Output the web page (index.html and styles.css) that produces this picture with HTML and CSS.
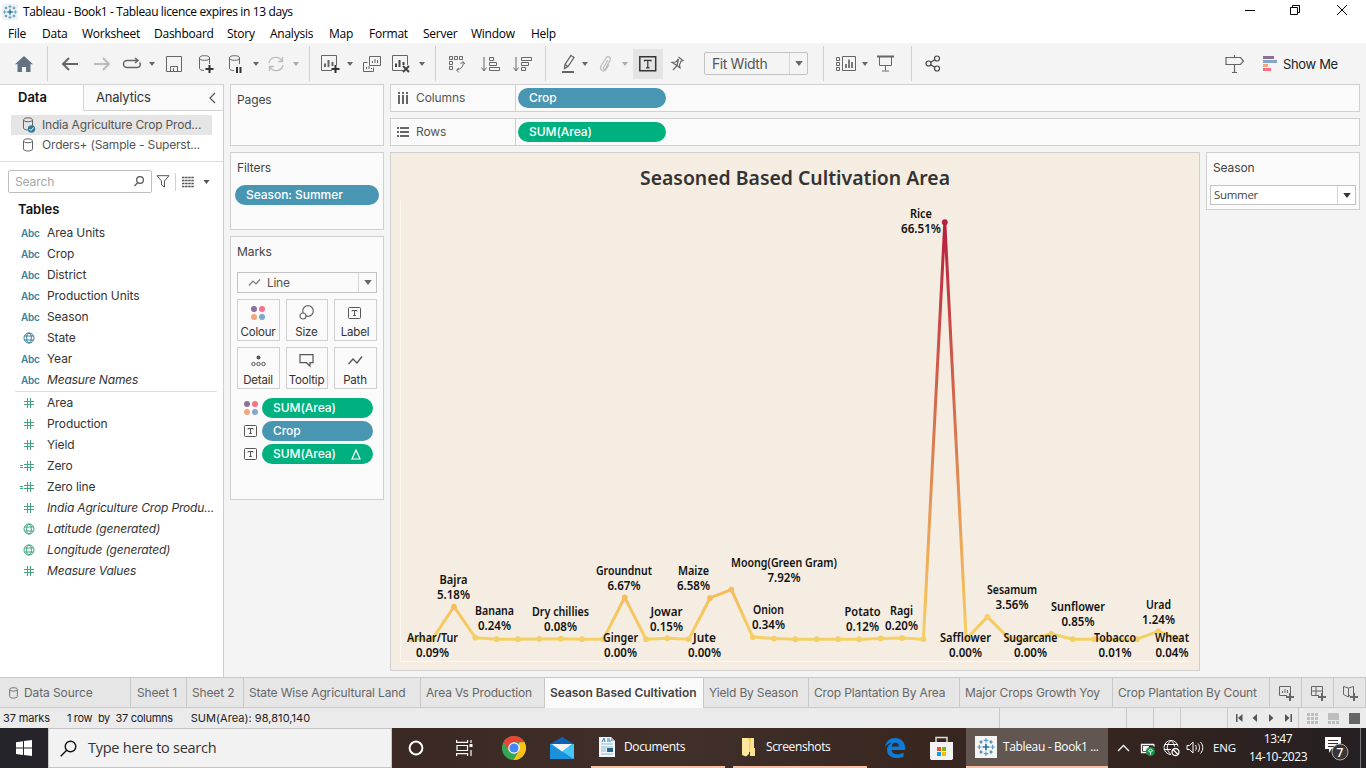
FILE: index.html
```html
<!DOCTYPE html>
<html lang="en">
<head>
<meta charset="utf-8">
<title>Tableau - Book1</title>
<link rel="stylesheet" href="styles.css">
</head>
<body>
<svg width="0" height="0" class="defs">
  <defs>
    <symbol id="arrow" viewBox="0 0 6 4"><path d="M0 0h6L3 4z" fill="currentColor"/></symbol>
    <symbol id="logo" viewBox="0 0 18 18"><g stroke="#1f77a4" fill="none"><path d="M9 6v6M6 9h6" stroke-width="1.5"/><path d="M9 1v4M7 3h4M9 13v4M7 15h4M1 9h4M3 7v4M13 9h4M15 7v4" stroke="#5a9dbd"/><path d="M4.500 3v3M3 4.500h3M13.500 3v3M12 4.500h3M4.500 12v3M3 13.500h3M13.500 12v3M12 13.500h3" stroke="#447d9e"/></g></symbol>
    <symbol id="cyl" viewBox="0 0 12 14"><g fill="none" stroke="#666"><ellipse cx="6" cy="2.800" rx="4.500" ry="2"/><path d="M1.500 3v8c0 1.200 2 2 4.500 2s4.500-.8 4.500-2V3"/></g></symbol>
    <symbol id="globe" viewBox="0 0 12 12"><g fill="none" stroke="currentColor"><circle cx="6" cy="6" r="5"/><ellipse cx="6" cy="6" rx="2.300" ry="5"/><path d="M1.500 4h9M1.500 8h9"/></g></symbol>
    <symbol id="hash" viewBox="0 0 16 12"><path d="M8.500 1v10M11.500 1v10M5 4.500h10M5 7.500h10" stroke="currentColor" fill="none"/></symbol>
    <symbol id="calc" viewBox="0 0 16 12"><path d="M8.500 1v10M11.500 1v10M5 4.500h10M5 7.500h10M1 5.500h3M1 7.500h3" stroke="currentColor" fill="none"/></symbol>
    <symbol id="tbox" viewBox="0 0 14 12"><rect x=".5" y=".5" width="12" height="11" rx="1" fill="none" stroke="#555"/><path d="M4 4.500V3.500h5v1M6.500 3.500v5M5.200 8.500h2.600" stroke="#555" fill="none"/></symbol>
    <symbol id="dots" viewBox="0 0 14 14"><circle cx="3" cy="3" r="3" fill="#8b7099"/><circle cx="11" cy="3" r="3" fill="#fb7085"/><circle cx="3" cy="11" r="3" fill="#f4a77c"/><circle cx="11" cy="11" r="3" fill="#84a6cb"/></symbol>
  </defs>
</svg>

<header class="titlebar">
  <svg class="app-logo" width="16" height="16"><use href="#logo"/></svg>
  <span class="app-title">Tableau - Book1 - Tableau licence expires in 13 days</span>
  <svg class="winctl" width="106" height="12" fill="none" stroke="#000"><path d="M0 6.500h10M45.500 3.500h7v7h-7zM47.500 3.500v-2h7v7h-2M92 1l10 10M102 1L92 11"/></svg>
</header>
<nav class="menubar"><span>File</span><span>Data</span><span>Worksheet</span><span>Dashboard</span><span>Story</span><span>Analysis</span><span>Map</span><span>Format</span><span>Server</span><span>Window</span><span>Help</span></nav>

<div class="toolbar">
  <span class="ic"><svg width="18" height="16"><path d="M9 0l9 8.200h-2.500V16h-4.500v-5H7v5H2.500V8.200H0z" fill="#657282"/></svg></span>
  <i class="sep"></i>
  <span class="ic"><svg width="17" height="14"><path d="M7 1L1 7l6 6M1 7h15" stroke-width="2"/></svg></span>
  <span class="ic faint"><svg width="17" height="14"><path d="M9 1l6 6-6 6M15 7H0" stroke-width="2"/></svg></span>
  <span class="ic"><svg width="18" height="12"><path d="M5 9.500H4a3 3 0 0 1 0-7h11M12 0l3 2.500L12 5M14 9.500a3 3 0 0 0 2.500-5M4 9.500h10.500" stroke-width="1.500"/></svg></span>
  <span class="dd"><svg><use href="#arrow"/></svg></span>
  <span class="ic"><svg width="16" height="16"><path d="M.5.5h15v15H.5zM4.500 15v-4.500h7V15M7.500 12v3"/></svg></span>
  <span class="ic"><svg width="16" height="18"><ellipse cx="6.500" cy="3" rx="5" ry="2.300"/><path d="M1.500 3v10.500c0 1 2 2 4.500 2M11.500 3v6"/><path d="M11.500 10v8M7.500 14h8" stroke="#333" stroke-width="2"/></svg></span>
  <span class="ic"><svg width="16" height="18"><ellipse cx="6.500" cy="3" rx="5" ry="2.300"/><path d="M1.500 3v10.500c0 1 2 2 4.500 2M11.500 3v6"/><path d="M9 12v6M12.500 12v6" stroke="#333" stroke-width="2"/></svg></span>
  <span class="dd"><svg><use href="#arrow"/></svg></span>
  <span class="ic faint"><svg width="18" height="16"><path d="M2 7a7 7 0 0 1 13-2M16 9a7 7 0 0 1-13 2M15.500 1v4.500H11M2.500 15v-4.500H7" stroke-width="1.300"/></svg></span>
  <span class="dd faint"><svg><use href="#arrow"/></svg></span>
  <i class="sep"></i>
  <span class="ic"><svg width="20" height="18"><path d="M12 15.500H1.500V.5h15V10"/><path d="M5 12V8.500M8.500 12V5M12.500 11V7" stroke-width="2"/><path d="M15.500 10v8M11.500 14h8" stroke="#333" stroke-width="2"/></svg></span>
  <span class="dd"><svg><use href="#arrow"/></svg></span>
  <span class="ic"><svg width="18" height="16"><path d="M6.500.5h11v9h-11zM4.500 6.500h-4v9h10v-4M9.500 7V5M12 7V3M14.500 7V4M3.500 13v-2M6 13v-3M8.500 13v-1"/></svg></span>
  <span class="ic"><svg width="20" height="18"><path d="M12 15.500H1.500V.5h15V10"/><path d="M5 12V8.500M8.500 12V5M12.500 10V7M12 11l6 6M18 11l-6 6" stroke="#444" stroke-width="2"/></svg></span>
  <span class="dd"><svg><use href="#arrow"/></svg></span>
  <i class="sep"></i>
  <span class="ic"><svg width="18" height="18"><path d="M1.500 1.500h3v3h-3zM6.500 1.500h3v3h-3zM11.500 1.500h3v3h-3zM1.500 6.500h3v3h-3zM1.500 11.500h3v3h-3zM15 7c1 4-2 7-6 8M12.500 9l2.500-2.500L17 9M11 13l-2.500 2 2.500 2.500"/></svg></span>
  <span class="ic"><svg width="19" height="16"><path d="M3 1v13M.5 11.500L3 15l2.500-3.500M8.500 1.500h4v3h-4zM8.500 6.500h7v3h-7zM8.500 11.500h10v3h-10z"/></svg></span>
  <span class="ic"><svg width="19" height="16"><path d="M3 1v13M.5 11.500L3 15l2.500-3.500M8.500 1.500h10v3h-10zM8.500 6.500h7v3h-7zM8.500 11.500h4v3h-4z"/></svg></span>
  <i class="sep"></i>
  <i></i>
  <span class="ic"><svg width="13" height="20"><path d="M9 1.500l3 2-6 9-3.500 2 .5-4zM3 10.500l3 2" stroke-width="1.300"/><path d="M0 18h12" stroke-width="2"/></svg></span>
  <span class="dd"><svg><use href="#arrow"/></svg></span>
  <span class="ic faint"><svg width="14" height="18"><path d="M10 5L5.500 12.500c-1 1.500 1 2.500 2 1l4.500-8c1.500-3-2-5.500-4-2.500L3 11c-2 4 3 7 5 3.500l3-5" stroke-width="1.200"/></svg></span>
  <span class="dd faint"><svg><use href="#arrow"/></svg></span>
  <span class="ic on"><svg width="18" height="16"><path d="M.8.8h15.900v14H.8z" stroke-width="1.500" stroke="#333"/><path d="M5.500 5.500V4.300h6.500v1.200M8.800 4.300v7.500M7 11.800h3.600" stroke-width="1.200" stroke="#333"/></svg></span>
  <span class="ic"><svg width="14" height="16"><path d="M8.500 1l4.500 3.500-2 .8-1.500 3.500.5 3L7 9.500 3 14M7 9.500L2 6.500l4-.5 2.500-3z" stroke-width="1.200"/></svg></span>
  <i></i>
  <span class="fit"><b>Fit Width</b><em><svg><use href="#arrow"/></svg></em></span>
  <i class="sep"></i>
  <i></i>
  <span class="ic"><svg width="20" height="16"><path d="M.5 1.500h3v3h-3zM.5 6.500h3v3h-3zM.5 11.500h3v3h-3zM6.500.5h13v14h-13z"/><path d="M10 12V8M13 12V3.500M16 12V6" stroke-width="1.700"/></svg></span>
  <span class="dd"><svg><use href="#arrow"/></svg></span>
  <span class="ic present"><svg width="17" height="17"><path d="M0 1.500h17" stroke-width="2"/><path d="M2.500 2v8.500h12V2M8.500 10v5.500M5 16h7"/></svg></span>
  <i class="sep"></i>
  <span class="ic share"><svg width="16" height="17"><circle cx="3.500" cy="8.500" r="2.500"/><circle cx="12" cy="3.500" r="2.500"/><circle cx="12" cy="13.500" r="2.500"/><path d="M5.800 7.200l4-2.400M5.800 9.800l4 2.400"/></svg></span>
  <i></i>
  <span class="ic"><svg width="19" height="18"><path d="M1 2.500h14.500l3 3.500-3 3.500H1zM9.500 0v2M9.500 10v7M7 17.500h5" stroke-width="1.200"/></svg></span>
  <span class="showme"><svg width="14" height="16"><path d="M0 0h11v3H0z" fill="#8b7099"/><path d="M0 4h14v3H0z" fill="#84a6cb"/><path d="M0 8h5v3H0z" fill="#f4a77c"/><path d="M0 12h8v3H0z" fill="#fb7085"/></svg>Show Me</span>
</div>

<main class="work">
  <aside class="data">
    <div class="dtabs"><span class="on">Data</span><span class="off">Analytics<svg width="7" height="12"><path d="M5 1L0 6l5 5" fill="none" stroke="#555" stroke-width="1.200"/></svg></span></div>
    <div class="sources">
      <p class="sel"><svg width="14" height="16"><use href="#cyl" width="12" height="14"/><circle cx="9.500" cy="12" r="3.700" fill="#2f7d9f"/><path d="M7.500 12l1.500 1.500 2.500-3" stroke="#fff" fill="none"/></svg>India Agriculture Crop Prod...</p>
      <p><svg width="14" height="14"><use href="#cyl" width="12" height="14"/></svg>Orders+ (Sample - Superst...</p>
    </div>
    <div class="searchrow">
      <span class="search">Search<svg width="10" height="11" fill="none" stroke="#555" stroke-width="1.200"><circle cx="6" cy="4" r="3.400"/><path d="M3.700 6.500L.5 10"/></svg></span>
      <svg class="funnel" width="14" height="13"><path d="M1 .7h12L8.500 6v6l-3-2V6z" fill="none" stroke="#555"/></svg>
      <i class="vline"></i>
      <svg width="12" height="10" stroke="#555"><path d="M0 .5h12M0 3.500h12M0 6.500h12M0 9.500h12" stroke-width="1.500" stroke-dasharray="2.500 .6"/></svg>
      <svg class="ddbig"><use href="#arrow"/></svg>
    </div>
    <h2>Tables</h2>
    <ul class="fields">
      <li><b>Abc</b>Area Units</li>
      <li><b>Abc</b>Crop</li>
      <li><b>Abc</b>District</li>
      <li><b>Abc</b>Production Units</li>
      <li><b>Abc</b>Season</li>
      <li><b><svg width="12" height="12"><use href="#globe"/></svg></b>State</li>
      <li><b>Abc</b>Year</li>
      <li class="it"><b>Abc</b>Measure Names</li>
    </ul>
    <ul class="fields meas">
      <li><b><svg width="16" height="12"><use href="#hash"/></svg></b>Area</li>
      <li><b><svg width="16" height="12"><use href="#hash"/></svg></b>Production</li>
      <li><b><svg width="16" height="12"><use href="#hash"/></svg></b>Yield</li>
      <li><b><svg width="16" height="12"><use href="#calc"/></svg></b>Zero</li>
      <li><b><svg width="16" height="12"><use href="#calc"/></svg></b>Zero line</li>
      <li class="it"><b><svg width="16" height="12"><use href="#hash"/></svg></b><span class="long">India Agriculture Crop Produ...</span></li>
      <li class="it"><b><svg width="12" height="12"><use href="#globe"/></svg></b>Latitude (generated)</li>
      <li class="it"><b><svg width="12" height="12"><use href="#globe"/></svg></b>Longitude (generated)</li>
      <li class="it"><b><svg width="16" height="12"><use href="#hash"/></svg></b>Measure Values</li>
    </ul>
  </aside>

  <section class="cards">
    <div class="card pages"><h3>Pages</h3></div>
    <div class="card filters"><h3>Filters</h3><span class="pill blue">Season: Summer</span></div>
    <div class="card marks">
      <h3>Marks</h3>
      <div class="marktype"><svg width="12" height="8" fill="none" stroke="#777" stroke-width="1.200"><path d="M0 6.500L4 2l3 3 4-4.500"/></svg><span>Line</span><em><svg><use href="#arrow"/></svg></em></div>
      <div class="btns">
        <span><svg width="14" height="14"><use href="#dots"/></svg>Colour</span>
        <span><svg width="16" height="15" fill="none" stroke="#666" stroke-width="1.200"><circle cx="9" cy="6" r="5.300"/><circle cx="4" cy="11" r="3" fill="#fafafa"/></svg>Size</span>
        <span><svg width="14" height="12"><use href="#tbox"/></svg>Label</span>
        <span><svg width="15" height="12" fill="none" stroke="#555"><circle cx="7.500" cy="2.500" r="2" fill="#555" stroke="none"/><circle cx="2.500" cy="9" r="1.700"/><circle cx="7.500" cy="9" r="1.700"/><circle cx="12.500" cy="9" r="1.700"/></svg>Detail</span>
        <span><svg width="15" height="13" fill="none" stroke="#555" stroke-width="1.200"><path d="M1 .7h13v8h-3V12L7.500 8.700H1z"/></svg>Tooltip</span>
        <span><svg width="15" height="9" fill="none" stroke="#555" stroke-width="1.300"><path d="M.5 8L5 3l4 4 5-6.500"/></svg>Path</span>
      </div>
      <div class="enc"><i><svg width="14" height="14"><use href="#dots"/></svg></i><span class="pill green">SUM(Area)</span></div>
      <div class="enc"><i><svg width="14" height="12"><use href="#tbox"/></svg></i><span class="pill blue">Crop</span></div>
      <div class="enc"><i><svg width="14" height="12"><use href="#tbox"/></svg></i><span class="pill green">SUM(Area)<svg width="11" height="11"><path d="M5 1L9 10H1z" fill="none" stroke="#fff" stroke-width="1.200"/></svg></span></div>
    </div>
  </section>

  <section class="sheet">
    <div class="shelf"><span class="lab"><svg width="12" height="12" fill="#666"><path d="M1 0h2v2H1zM5 0h2v2H5zM9 0h2v2H9zM1 3h2v9H1zM5 3h2v9H5zM9 3h2v9H9z"/></svg>Columns</span><span class="pill blue">Crop</span></div>
    <div class="shelf"><span class="lab"><svg width="12" height="10" fill="#666"><path d="M0 0h2v2H0zM0 4h2v2H0zM0 8h2v2H0zM3 0h9v2H3zM3 4h9v2H3zM3 8h9v2H3z"/></svg>Rows</span><span class="pill green">SUM(Area)</span></div>
    <div class="viewrow">
      <div class="view"><svg id="chart" width="808" height="517" viewBox="391 153 808 517">
        <defs><linearGradient id="heat" gradientUnits="userSpaceOnUse" x1="0" y1="639" x2="0" y2="222">
          <stop offset="0" stop-color="#f4d166"/><stop offset=".11" stop-color="#f6bb59"/><stop offset=".25" stop-color="#eaa359"/><stop offset=".5" stop-color="#d9754f"/><stop offset=".75" stop-color="#c94a47"/><stop offset="1" stop-color="#b71d3e"/>
        </linearGradient></defs>
        <path d="M400.500 199v462.500H1191" fill="none" stroke="#fbf7f1"/>
        <text class="ctitle" x="795" y="185" textLength="310" lengthAdjust="spacingAndGlyphs">Seasoned Based Cultivation Area</text>
      </svg></div>
      <div class="legend"><h3>Season</h3><div class="combo"><span>Summer</span><em><svg><use href="#arrow"/></svg></em></div></div>
    </div>
  </section>
</main>

<nav class="sheets">
  <span><svg width="11" height="12"><use href="#cyl"/></svg>Data Source</span><span>Sheet 1</span><span>Sheet 2</span><span>State Wise Agricultural Land</span><span>Area Vs Production</span><span class="on">Season Based Cultivation</span><span>Yield By Season</span><span>Crop Plantation By Area</span><span>Major Crops Growth Yoy</span><span>Crop Plantation By Count</span>
  <span class="new"><svg width="16" height="16"><path d="M9 10.500H1.500v-9h11V8M4.500 8V6M7 8V4M9.500 8V5"/><path d="M12 8v8M8 12h8" stroke-width="2"/></svg></span>
  <span class="new"><svg width="16" height="16"><path d="M9 10.500H1.500v-9h11V8M1.500 6h11M6 1.500v9"/><path d="M12 8v8M8 12h8" stroke-width="2"/></svg></span>
  <span class="new"><svg width="16" height="16"><path d="M8 10L6.500 12 1.500 9.500v-8L6.500 3v9M6.500 3l5-1.500V8"/><path d="M12 8v8M8 12h8" stroke-width="2"/></svg></span>
</nav>
<div class="status"><span><a>37 marks</a><a class="s2">1 row&nbsp; by&nbsp; 37 columns</a><a class="s3">SUM(Area): 98,810,140</a></span><span></span><span></span><span></span><span></span>
  <span class="ctr"><svg width="54" height="8" fill="#555"><path d="M0 0h1.500v8H0zM6.500 0v8L2 4zM21 0v8l-4.500-4zM33 0v8l4.500-4zM49 0v8l4.500-4zM54.500 0H56v8h-1.500z"/></svg></span>
  <span class="ctr"><svg width="51" height="11"><path d="M0 0h3v3H0zM4 0h3v3H4zM8 0h3v3H8zM0 4h3v3H0zM4 4h3v3H4zM8 4h3v3H8zM0 8h3v3H0zM4 8h3v3H4zM8 8h3v3H8zM21 0h11v7H21zM21 8h3v3h-3zM25 8h3v3h-3zM29 8h3v3h-3z" fill="#bdbdbd"/><path d="M42 0h11v11H42z" fill="#666"/></svg></span>
</div>

<footer class="taskbar">
  <span class="start"><svg width="16" height="16" fill="#fff"><path d="M0 2.300L7 1.200V7.600H0zM8 1l8-1v7.600H8zM0 8.500h7v6.400L0 13.900zM8 8.500h8V16l-8-1.100z"/></svg></span>
  <span class="find"><svg width="17" height="17" fill="none" stroke="#111" stroke-width="1.400"><circle cx="10.500" cy="6.500" r="5.300"/><path d="M6.700 10.300L.7 16.300"/></svg>Type here to search</span>
  <span class="tb"><svg width="16" height="16"><circle cx="8" cy="8" r="6.400" fill="none" stroke="#fff" stroke-width="2"/></svg></span>
  <span class="tb"><svg width="17" height="16" fill="none" stroke="#fff" stroke-width="1.200"><path d="M.6 0v2.400h11V0M.6 16v-2.400h11V16M1 5.500h10.500v5H1zM15 0v3M15 10v6"/><path d="M13.500 4h3v3h-3z" fill="#fff" stroke="none"/></svg></span>
  <span class="tb"><svg width="24" height="24"><circle cx="12" cy="12" r="12" fill="#34a853"/><path d="M1.600 6A12 12 0 0 1 22.400 6L12 6.500l-5 8.500z" fill="#ea4335"/><path d="M22.400 6A12 12 0 0 1 11.500 24L17 15V6.500z" fill="#fbc116"/><circle cx="12" cy="12" r="5.800" fill="#fff"/><circle cx="12" cy="12" r="4.600" fill="#4285f4"/></svg></span>
  <span class="tb mail"><svg width="24" height="22"><path d="M12 0l12 7v3H0V7z" fill="#0f61b5"/><path d="M0 7h24v15H0z" fill="#2fb4f0"/><path d="M0 7l24 15H0z" fill="#1c92dc"/><path d="M12 14l12-7v15z" fill="#45c6f6"/><path d="M2 7h20l-10 7.500z" fill="#f3f3f3"/></svg></span>
  <span class="task doc"><svg width="16" height="22"><path d="M0 1h12l4 4v16H0z" fill="#f4f7f9"/><path d="M12 1v4h4" fill="#9fb6c4"/><path d="M2 8h12M2 11h12M2 13h5M2 15h5M2 18h12" stroke="#8db9d3"/><path d="M3 6l2-4 1 4M8 3h3M8 5h4" stroke="#2b7fc0" fill="none"/><path d="M8 12h6v4H8z" fill="#2c6587"/></svg>Documents</span>
  <span class="task fold"><svg width="15" height="20"><path d="M1 1h9v14H1z" fill="#f2cf69"/><path d="M10 1h3v10h1v8H9v-6z" fill="#fae391"/><path d="M1 1h5l2 2v14l-3 2.500L1 18z" fill="#ffe79c"/></svg>Screenshots</span>
  <span class="tb"><svg width="20" height="20"><path d="M0 9C1 3 5 0 10 0c6 0 10 4 10 9v3H6.500c.3 3 2.500 4.200 5.500 4.200 2.700 0 5-.8 6.600-1.800v4C17 19.400 14 20 11 20 5.500 20 2 16.500 2 11.800 2 8.500 4 6 7 4.700 4 5 1.800 6.500 0 9zM6.700 8.500h7.300C14 6 12.500 4.800 10.400 4.800 8.300 4.800 7 6.300 6.700 8.500z" fill="#0d7bd8"/></svg></span>
  <span class="tb"><svg width="23" height="24"><path d="M6 7V1.500h11V7" fill="none" stroke="#ddd" stroke-width="1.500"/><path d="M0 6h23v16.500l-1 1.500H1l-1-1.500z" fill="#f2f2f2"/><path d="M7 11h4v4H7z" fill="#f25022"/><path d="M12 11h4v4h-4z" fill="#7fba00"/><path d="M7 16h4v4H7z" fill="#00a4ef"/><path d="M12 16h4v4h-4z" fill="#ffb900"/></svg></span>
  <span class="task act"><svg width="22" height="22"><rect width="22" height="22" fill="#f4f4f4"/><use href="#logo" x="1" y="1" width="20" height="20"/></svg>Tableau - Book1 ...</span>
  <span class="tray">
    <svg width="92" height="18" fill="none" stroke="#fff" stroke-width="1.300"><path d="M1 12l5.500-5.500L12 12"/><path d="M37 5.500H24.500v8H30M37 5.500v2"/><path d="M26 7h6v5h-6z" fill="#fff" stroke="none"/><circle cx="33.500" cy="12.500" r="4.500" fill="#159447" stroke="none"/><path d="M33.500 15.500v-3M33.500 9.800l2 2-2 2-2-2z" stroke-width="1"/><path d="M54 1.500a7 7 0 1 0 0 14M54 1.500c-5 4-5 10 0 14M54 1.500c2.500 2 3.500 4 3.500 6M54 1.500a7 7 0 0 1 7 6M47.500 5.500h13M47 10.500h7" stroke-width="1"/><circle cx="58.500" cy="13" r="3.500"/><path d="M56 10.500l5 5"/><path d="M70 6.500h2.500L76 3v11l-3.500-3.500H70zM78.500 6c1 1.500 1 4 0 5.500M81 4.500c2 2.500 2 6 0 8.500M83.500 3c3 3.500 3 8 0 11.500" stroke-width="1"/></svg>
  </span>
  <span class="lang">ENG</span>
  <span class="clock">13:47<br>14-10-2023</span>
  <span class="notif"><svg width="26" height="26"><path d="M0 1h16v12H6.500L4 17v-4H0z" fill="#fff"/><path d="M3 4.500h10M3 7.500h10M3 10.500h6" stroke="#3a2d2a"/><circle cx="15" cy="16" r="8" fill="#3d3434" stroke="#aaa"/><text x="15" y="20.500" class="num">7</text></svg></span>
</footer>
<script src="chart.js"></script>
</body>
</html>
```

FILE: styles.css
```css
* { box-sizing: border-box; }
body { margin: 0; width: 1366px; height: 768px; overflow: hidden; background: #f4f4f4; color: #333; font: 12px/16px Inter, "Open Sans", sans-serif; display: flex; flex-direction: column; }
svg { display: block; flex: none; overflow: visible; }
.defs { position: absolute; }
i, em { font-style: normal; }
p, h2, h3, ul { margin: 0; padding: 0; list-style: none; font-weight: 400; }

.titlebar { height: 23px; background: #fff; display: flex; align-items: center; padding-left: 2px; color: #000; font: 12px/16px "Open Sans", sans-serif; }
.app-logo { background: #eef3f5; margin-right: 5px; }
.app-title { letter-spacing: -.37px; white-space: nowrap; }
.winctl { margin-left: auto; margin-right: 15px; margin-top: -3px; }
.menubar { height: 20px; background: #fff; display: grid; grid-template-columns: 34px 40px 72px 73px 43px 59px 40px 54px 48px 60px 40px; padding-left: 8px; color: #000; font: 12px/21px "Open Sans", sans-serif; letter-spacing: -.25px; }

.toolbar { height: 41px; background: #f4f4f4; display: grid; align-items: center; grid-template-columns: 47px 8px 30px 34px 26px 14px 30px 34px 26px 14px 26px 14px 14px 26px 14px 29px 29px 14px 12px 32px 34px 30px 9px 12px 20px 14px 26px 14px 31px 28px 13px 104px 16px 10px 24px 14px 30px 10px 42px 266px 29px 110px; }
.toolbar .ic, .toolbar .dd { display: flex; justify-content: center; }
.ic svg { fill: none; stroke: #666; }
.toolbar .ic:first-child svg { stroke: none; }
.ic.faint svg { stroke: #bbb; }
.ic.share svg { stroke: #444; stroke-width: 1.2; }
.toolbar .present { padding-right: 3px; }
.dd { color: #666; }
.dd.faint { color: #aaa; }
.dd svg, em svg { width: 6px; height: 4px; }
.toolbar .sep { height: 35px; border-left: 1px solid #d0d0d0; }
.toolbar .sep:nth-child(13) { margin-left: 6px; }
.toolbar .sep:nth-child(19) { margin-left: 6px; }
.toolbar .sep:nth-child(23) { margin-left: 8px; }
.toolbar .sep:nth-child(33) { margin-left: 15px; }
.toolbar .sep:nth-child(38) { margin-left: 9px; }
.ic.on { background: #e4e4e4; height: 30px; width: 30px; align-items: center; margin-left: 1px; }
.fit { height: 23px; border: 1px solid #c3c3c3; border-radius: 2px; display: flex; align-items: center; color: #555; font-size: 14px; letter-spacing: -.4px; }
.fit b { font-weight: 400; flex: 1; padding-left: 7px; }
em { width: 18px; align-self: stretch; border-left: 1px solid #d6d6d6; display: flex; align-items: center; justify-content: center; color: #666; }
em svg { width: 8px; height: 5px; }
.showme { display: flex; gap: 6px; align-items: center; padding-left: 14px; font-size: 13px; color: #222; letter-spacing: -.35px; white-space: nowrap; }

.work { height: 593px; display: flex; }
.data { width: 224px; background: #fff; border-right: 1px solid #cfcfcf; border-top: 1px solid #d4d4d4; flex: none; }
.dtabs { display: flex; height: 26px; font-size: 13px; line-height: 25px; }
.dtabs .on { width: 83px; padding-left: 18px; font-weight: 600; font-size: 13px; color: #111; }
.dtabs .off { flex: 1; border-left: 1px solid #d4d4d4; border-bottom: 1px solid #d4d4d4; background: #fafafa; padding: 0 6px 0 12px; display: flex; justify-content: space-between; align-items: center; color: #333; letter-spacing: -.2px; }
.sources { padding: 4px 11px 6px; height: 51px; border-bottom: 1px solid #dcdcdc; color: #555; }
.sources p { height: 20px; display: flex; align-items: center; gap: 6px; padding-left: 11px; white-space: nowrap; letter-spacing: -.18px; }
.sources .sel { background: #e5e5e5; }
.searchrow { height: 39px; display: flex; align-items: center; padding-left: 8px; }
.search { width: 144px; height: 23px; border: 1px solid #bdbdbd; border-radius: 2px; display: flex; align-items: center; justify-content: space-between; padding: 0 7px 0 6px; color: #a5a5a5; letter-spacing: -.1px; }
.funnel { margin-left: 4px; }
.vline { width: 1px; height: 18px; background: #d0d0d0; margin: 0 6px 0 5px; }
.ddbig { width: 7px; height: 4px; margin-left: 9px; color: #555; }
h2 { font: 600 13px/16px Inter, sans-serif; color: #111; padding-left: 18px; height: 21px; }
.fields li { height: 21px; display: flex; align-items: center; color: #333; padding-left: 20px; white-space: nowrap; letter-spacing: -.1px; }
.fields b { width: 27px; font: 600 10px/14px Inter, sans-serif; color: #3a7f9c; padding-left: 1px; letter-spacing: -.2px; }
.fields b svg { margin-left: 2px; }
.fields b svg[width="16"] { margin-left: -2px; }
.fields .it { font-style: italic; letter-spacing: -.16px; }
.fields .it b { font-style: normal; }
.meas { margin: 1px 6px 0 15px; border-top: 1px solid #dcdcdc; }
.meas li { padding-left: 5px; }
.meas b { color: #3fa67d; }
.long { letter-spacing: -.17px; }

.cards { width: 160px; padding-left: 6px; display: flex; flex-direction: column; gap: 6px; flex: none; }
.card { width: 154px; border: 1px solid #d0d0d0; background: #fafafa; padding: 7px 4px; }
h3 { font: 12px/16px Inter, sans-serif; color: #444; letter-spacing: -.1px; }
.card h3 { padding-left: 2px; }
.pages { height: 62px; }
.filters { height: 78px; }
.marks { height: 264px; padding-left: 6px; }
.marks h3 { padding-left: 0; }
.pill { display: flex; align-items: center; height: 20px; border-radius: 10px; color: #fff; padding: 0 11px; font-weight: 500; letter-spacing: -.05px; }
.blue { background: #4996b2; }
.green { background: #00b180; }
.filters .pill { margin-top: 9px; }
.marktype { margin-top: 12px; width: 140px; height: 21px; border: 1px solid #c3c3c3; display: flex; align-items: center; background: #fafafa; color: #555; letter-spacing: -.3px; }
.marktype > svg { margin-left: 11px; margin-right: 6px; }
.marktype > span { flex: 1; }
.btns { display: grid; grid-template-columns: 43px 42px 43px; gap: 6px; margin-top: 6px; width: 140px; }
.btns span { height: 42px; border: 1px solid #d0d0d0; display: grid; grid-template-rows: 25px 14px; place-items: center; font-size: 11.500px; line-height: 14px; color: #333; white-space: nowrap; letter-spacing: -.2px; padding-right: 1px; }
.enc { display: flex; width: 136px; margin-top: 3px; align-items: center; }
.btns + .enc { margin-top: 9px; }
.enc i { width: 25px; padding-left: 7px; }
.enc .pill { flex: 1; justify-content: space-between; }

.sheet { flex: 1; padding-left: 6px; }
.shelf { width: 970px; height: 28px; border: 1px solid #d0d0d0; background: #fafafa; display: flex; align-items: center; margin-bottom: 6px; }
.lab { width: 125px; height: 26px; border-right: 1px solid #d0d0d0; display: flex; align-items: center; gap: 7px; padding-left: 6px; color: #555; margin-right: 2px; letter-spacing: -.1px; }
.shelf .pill { width: 148px; }
.viewrow { display: flex; gap: 6px; }
.view { width: 810px; height: 519px; border: 1px solid #d0d0d0; background: #f5ede2; }
.ctitle { font: 600 20px "Noto Sans", "Open Sans", sans-serif; fill: #333; text-anchor: middle; }
.lbl { font: 600 12px "Noto Sans", "Open Sans", sans-serif; fill: #111; text-anchor: middle; }
.legend { width: 154px; height: 58px; border: 1px solid #d0d0d0; background: #fafafa; padding: 7px 3px 0; }
.legend h3 { padding-left: 3px; }
.combo { height: 20px; margin-top: 9px; width: 146px; background: #fff; border: 1px solid #c3c3c3; display: flex; align-items: center; padding-left: 3px; font: 11.500px/16px "Open Sans", sans-serif; color: #444; letter-spacing: -.3px; }
.combo span { flex: 1; }
.combo em { color: #333; }

.sheets { height: 31px; border-top: 1px solid #c8c8c8; border-bottom: 1px solid #c8c8c8; background: #e6e6e6; display: grid; grid-template-columns: 131px 56px 57px 177px 124px 159px 105px 151px 153px 157px 32px 32px 32px; color: #666; line-height: 30px; }
.sheets span { border-right: 1px solid #c8c8c8; padding-left: 5px; display: flex; align-items: center; white-space: nowrap; letter-spacing: -.16px; }
.sheets span:nth-child(2) { padding-left: 6px; }
.sheets span:first-child { padding-left: 8px; gap: 5px; letter-spacing: -.1px; }
.sheets .on { background: #fafafa; color: #444; font-weight: 600; letter-spacing: -.06px; }
.sheets .new { justify-content: center; padding: 0; }
.new svg { fill: none; stroke: #666; }
.status { height: 20px; background: #ebebeb; display: grid; grid-template-columns: 1000px 127px 27px 27px 47px 71px 67px; font-size: 11px; color: #222; }
.status > span { border-right: 1px solid #c8c8c8; }
.status > span:first-child { padding-left: 3px; display: flex; align-items: center; white-space: nowrap; letter-spacing: -.15px; }
.status > span:last-child { border: 0; }
.s2 { margin-left: 17px; letter-spacing: -.3px; }
.s3 { margin-left: 18px; letter-spacing: .04px; }
.ctr { display: flex; align-items: center; justify-content: center; }

.taskbar { height: 40px; display: grid; align-items: center; grid-template-columns: 48px 344px 48px 48px 52px 46px 142px 142px 50px 42px 146px 105px 26px 86px 41px; background: linear-gradient(90deg, #24242b 0, #3a2822 28%, #41302a 50%, #38261f 68%, #35251f 82%, #241f22 100%); color: #fff; font: 12px/16px "Open Sans", sans-serif; }
.start, .tb { display: flex; justify-content: center; }
.mail { padding-right: 2px; }
.find { height: 40px; background: #f2f2f2; border: 1px solid #c6c6c6; display: flex; align-items: center; gap: 11px; padding-left: 11px; color: #333; font-size: 14.500px; letter-spacing: -.27px; }
.task { height: 40px; display: flex; align-items: center; gap: 9px; border-bottom: 2px solid #f5c1a6; white-space: nowrap; letter-spacing: -.36px; }
.doc { margin: 0 3px 0 5px; padding-left: 8px; }
.fold { margin: 0 3px 0 5px; padding-left: 8px; gap: 10px; }
.act { background: #625650; margin-left: 4px; padding-left: 9px; gap: 6px; }
.tray { padding-left: 9px; }
.lang { letter-spacing: -.2px; font-size: 11.500px; }
.clock { text-align: center; font-size: 12px; line-height: 18px; letter-spacing: -.45px; padding-right: 10px; padding-left: 2px; }
.notif { padding: 8px 0 0 0; height: 40px; border-right: 1px solid #777; margin-right: 5px; }
.num { font: 600 12px "Open Sans", sans-serif; fill: #fff; text-anchor: middle; }
```

FILE: chart.js
```javascript
const NS = 'http://www.w3.org/2000/svg';
const chart = document.getElementById('chart');
const share = [0, 0.09, 5.18, 0.24, 0, 0, 0.05, 0.08, 0, 0, 6.67, 0, 0.15, 0, 6.58, 7.92, 0.34, 0.1, 0, 0, 0, 0, 0.12, 0.2, 0,
  66.51, 0, 3.56, 0.15, 0, 0.85, 0, 0, 0.01, 0, 1.24, 0.04];
const px = i => 411.3 + 21.34 * i;
const py = v => 639.2 - 6.27 * v;

function add(tag, attrs, text) {
  const el = document.createElementNS(NS, tag);
  for (const k in attrs) el.setAttribute(k, attrs[k]);
  if (text) el.textContent = text;
  chart.appendChild(el);
}

add('polyline', { points: share.map((v, i) => px(i) + ',' + py(v)).join(' '), fill: 'none', stroke: 'url(#heat)', 'stroke-width': 3, 'stroke-linejoin': 'round' });
share.forEach((v, i) => add('circle', { cx: px(i), cy: py(v), r: 2.9, fill: v > 50 ? '#b71d3e' : v > 5 ? '#f6bd5a' : '#f4cf65' }));

// name, value, centre x, baseline, name width
[
  ['Arhar/Tur', '0.09%', 432.5, 642.4, 51], ['Bajra', '5.18%', 453.5, 584.4, 28], ['Banana', '0.24%', 494.5, 615.4, 39],
  ['Dry chillies', '0.08%', 560.5, 616.4, 57], ['Ginger', '0.00%', 620.5, 642.4, 35], ['Groundnut', '6.67%', 624, 575.4, 56],
  ['Jowar', '0.15%', 666.5, 616.4, 32], ['Maize', '6.58%', 693.5, 575.4, 31], ['Jute', '0.00%', 704.5, 642.4, 23],
  ['Moong(Green Gram)', '7.92%', 784, 567.4, 106], ['Onion', '0.34%', 768.5, 614.4, 31], ['Potato', '0.12%', 862.5, 616.4, 36],
  ['Ragi', '0.20%', 901.5, 615.4, 23], ['Rice', '66.51%', 921, 218.4, 22], ['Safflower', '0.00%', 965.5, 642.4, 51],
  ['Sesamum', '3.56%', 1012, 594.4, 50], ['Sugarcane', '0.00%', 1030.5, 642.4, 54], ['Sunflower', '0.85%', 1078, 611.4, 54],
  ['Tobacco', '0.01%', 1115, 642.4, 42], ['Urad', '1.24%', 1158.5, 609.4, 25], ['Wheat', '0.04%', 1172, 642.4, 34]
].forEach(([name, val, x, y, w]) => {
  add('text', { class: 'lbl', x, y, textLength: w, lengthAdjust: 'spacingAndGlyphs' }, name);
  add('text', { class: 'lbl', x, y: y + 15, textLength: val.length > 5 ? 40 : 33, lengthAdjust: 'spacingAndGlyphs' }, val);
});
```
